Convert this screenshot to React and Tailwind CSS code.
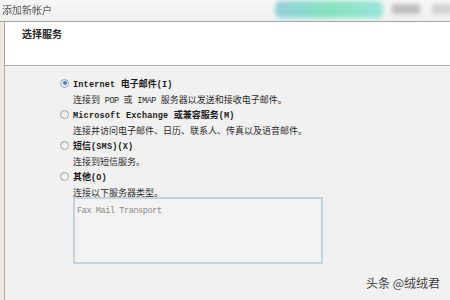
import React from "react";

const ASCII = "font-['Liberation_Mono',monospace] text-[8.5px] tracking-[-0.4px]";
const ASCII_B = "font-['Liberation_Mono',monospace] text-[8.5px] font-bold tracking-[0.2px]";
const CJK = "font-['Noto_Sans_CJK_SC',sans-serif] text-[9px]";
const CJK_B = "font-['Noto_Sans_CJK_SC',sans-serif] text-[9px] font-bold";

function Mixed({ text, bold }) {
  const parts = text.split(/([\x00-\x7F]+)/).filter((p) => p.length > 0);
  return (
    <>
      {parts.map((p, i) =>
        /^[\x00-\x7F]+$/.test(p) ? (
          <span key={i} className={bold ? ASCII_B : ASCII}>
            {p.replace(/ /g, "\u00a0")}
          </span>
        ) : (
          <span key={i} className={bold ? CJK_B : CJK}>
            {p}
          </span>
        )
      )}
    </>
  );
}

function Radio({ checked }) {
  return (
    <div className="w-[9px] h-[9px] rounded-full border border-[#9aa3ad] bg-gradient-to-br from-[#e4e4e4] to-[#fafafa] flex items-center justify-center shrink-0">
      {checked && <div className="w-[4px] h-[4px] rounded-full bg-[#3a7bd5]" />}
    </div>
  );
}

function Option({ checked, title, desc, children }) {
  return (
    <div className="mb-[3px]">
      <div className="flex items-center h-[14px] gap-[4px]">
        <Radio checked={checked} />
        <div className="leading-[14px] text-[#1a1a1a] whitespace-nowrap">
          <Mixed text={title} bold />
        </div>
      </div>
      <div className="pl-[13px] h-[14px] leading-[14px] text-[#2a2a2a] whitespace-nowrap">
        <Mixed text={desc} />
      </div>
      {children}
    </div>
  );
}

export default function App() {
  return (
    <div className="w-[450px] h-[300px] relative overflow-hidden bg-[#f1f1f1] flex flex-col">
      {/* title bar */}
      <div className="h-[22px] relative shrink-0 bg-gradient-to-b from-[#f7f7f7] to-[#eef0ee] border-b border-[#a3a3a3] overflow-hidden">
        <div className="absolute left-[275px] top-[1px] w-[108px] h-[17px] rounded-[6px] bg-gradient-to-r from-[#93cfe0] via-[#86e3bd] to-[#98e6dc] blur-[2px]" />
        <div className="absolute left-[392px] top-[4px] w-[28px] h-[10px] bg-[#9c9c9c] blur-[2px] opacity-60" />
        <div className="absolute left-[432px] top-[4px] w-[20px] h-[10px] bg-[#b0b0b0] blur-[2px] opacity-50" />
        <div className="absolute left-[2px] top-[3px] leading-[14px] text-[10px] text-[#555] font-['Noto_Sans_CJK_SC',sans-serif] blur-[0.3px]">
          添加新帐户
        </div>
      </div>
      <div className="flex flex-1">
        <div className="w-[5px] bg-gradient-to-r from-[#f1e4d0] to-[#ececec] border-r border-[#a8a8a8] shrink-0" />
        <div className="flex-1 flex flex-col">
          {/* header */}
          <div className="h-[44px] bg-white border-b border-[#a9a9a9] pl-[17px] pt-[5px] shrink-0">
            <div className="text-[10px] leading-[14px] font-bold text-[#222] font-['Noto_Sans_CJK_SC',sans-serif]">
              选择服务
            </div>
          </div>
          {/* body */}
          <div className="flex-1 pl-[55px] pt-[9px] border-t border-[#fbfbfb]">
            <Option
              checked
              title="Internet 电子邮件(I)"
              desc="连接到 POP 或 IMAP 服务器以发送和接收电子邮件。"
            />
            <Option
              title="Microsoft Exchange 或兼容服务(M)"
              desc="连接并访问电子邮件、日历、联系人、传真以及语音邮件。"
            />
            <Option title="短信(SMS)(X)" desc="连接到短信服务。" />
            <Option title="其他(O)" desc="连接以下服务器类型。">
              <div className="ml-[13px] w-[250px] h-[67px] border-2 border-[#c6d1dc] bg-[#f2f2f2] px-[2px] pt-[2px]">
                <div className="leading-[12px] text-[#8a8a8a] whitespace-nowrap">
                  <span className={ASCII}>Fax&nbsp;Mail&nbsp;Transport</span>
                </div>
              </div>
            </Option>
          </div>
        </div>
      </div>
      {/* watermark */}
      <div className="absolute right-[10px] bottom-[10px] text-[12px] leading-[14px] text-[#3c3c3c] font-['Noto_Sans_CJK_SC',sans-serif] [text-shadow:0_0_2px_#ffffff]">
        头条 @绒绒君
      </div>
    </div>
  );
}
